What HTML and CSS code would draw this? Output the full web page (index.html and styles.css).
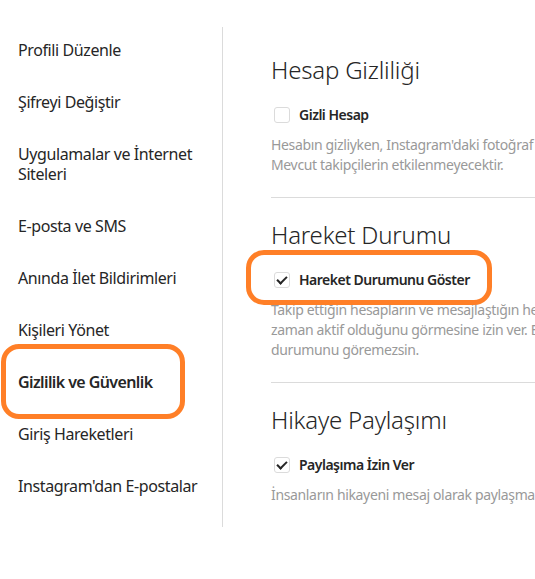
FILE: index.html
```html
<!DOCTYPE html>
<html lang="tr">

<head>
    <meta charset="utf-8" />
    <title>Gizlilik ve Güvenlik</title>

    <link rel="stylesheet" href="styles.css">

</head>

<body>
    <div class="layout">
        <ul class="side-nav">
            <li>Profili Düzenle</li>
            <li>Şifreyi Değiştir</li>
            <li>Uygulamalar ve İnternet Siteleri</li>
            <li>E-posta ve SMS</li>
            <li>Anında İlet Bildirimleri</li>
            <li>Kişileri Yönet</li>
            <li class="active">Gizlilik ve Güvenlik</li>
            <li>Giriş Hareketleri</li>
            <li>Instagram'dan E-postalar</li>
        </ul>

        <main class="settings">
            <section>
                <h2>Hesap Gizliliği</h2>
                <label class="check-row">
                    <span class="box"></span>
                    Gizli Hesap
                </label>
                <p class="hint">Hesabın gizliyken, Instagram'daki fotoğraf ve videolarını sadece onayladığın kişiler görebilir.<br>Mevcut takipçilerin etkilenmeyecektir.</p>
            </section>
            <section>
                <h2>Hareket Durumu</h2>
                <label class="check-row">
                    <span class="box checked"></span>
                    Hareket Durumunu Göster
                </label>
                <p class="hint">Takip ettiğin hesapların ve mesajlaştığın herkesin, Instagram uygulamalarında en son ne<br>zaman aktif olduğunu görmesine izin ver. Bu ayar kapatıldığında diğer hesapların hareket<br>durumunu göremezsin.</p>
            </section>
            <section>
                <h2>Hikaye Paylaşımı</h2>
                <label class="check-row">
                    <span class="box checked"></span>
                    Paylaşıma İzin Ver
                </label>
                <p class="hint">İnsanların hikayeni mesaj olarak paylaşmalarına izin ver</p>
            </section>
        </main>
    </div>

    <!-- hand-drawn highlight marks -->
    <div class="mark mark-nav"></div>
    <div class="mark mark-status"></div>

</body>

</html>
```

FILE: styles.css
```css
html {
    font-family: "Noto Sans", "Open Sans", sans-serif;
    color: #262626;
}

body {
    margin: 0;
    overflow: hidden;
    background: #fff;
}

.layout {
    display: flex;
    margin-top: 27px;
}

.side-nav {
    list-style: none;
    margin: 0;
    padding: 0 0 10px;
    width: 222px;
    flex-shrink: 0;
    border-right: 1px solid #dbdbdb;
}

.side-nav li {
    font-size: 16px;
    line-height: 20px;
    padding: 13px 8px 19px 18px;
    letter-spacing: -0.4px;
}

.side-nav .active {
    font-weight: 600;
    letter-spacing: -0.6px;
}

.settings {
    width: 620px;
    flex-shrink: 0;
    padding: 6px 0 0 48px;
}

section {
    padding: 22px 0;
    border-bottom: 1px solid #dbdbdb;
}

section:last-child {
    border-bottom: none;
}

h2 {
    margin: 0 0 21px;
    font-size: 24px;
    line-height: 30px;
    font-weight: 300;
    letter-spacing: -0.2px;
}

.check-row {
    display: flex;
    align-items: center;
    gap: 9px;
    font-size: 14px;
    line-height: 18px;
    font-weight: 600;
    letter-spacing: -0.5px;
    padding-left: 3px;
}

.box {
    width: 14px;
    height: 14px;
    border: 1px solid #dbdbdb;
    border-radius: 3px;
    position: relative;
}

.box.checked::after {
    content: "";
    position: absolute;
    left: 4px;
    top: 1px;
    width: 4px;
    height: 8px;
    border: solid #262626;
    border-width: 0 2px 2px 0;
    transform: rotate(45deg);
}

.hint {
    margin: 11px 0 0;
    font-size: 14px;
    line-height: 20px;
    color: #999;
    white-space: nowrap;
    letter-spacing: -0.35px;
}

.mark {
    position: absolute;
    border: 5px solid #ff7f27;
    border-radius: 18px;
}

.mark-nav {
    left: 1px;
    top: 344px;
    width: 174px;
    height: 65px;
}

.mark-status {
    left: 246px;
    top: 250px;
    width: 236px;
    height: 45px;
}
```
